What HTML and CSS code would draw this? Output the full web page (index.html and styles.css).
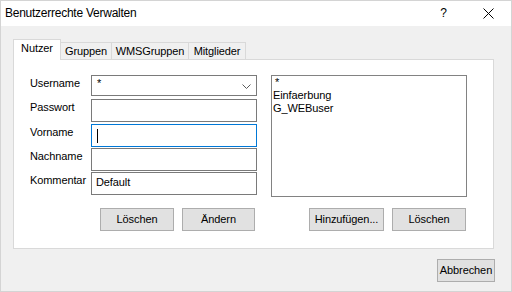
FILE: index.html
```html
<!DOCTYPE html>
<html>
<head>
<meta charset="utf-8">
<title>Benutzerrechte Verwalten</title>
<link rel="stylesheet" href="styles.css">
</head>
<body>
<div class="window">
  <div class="titlebar">
    <span class="title">Benutzerrechte Verwalten</span>
    <span class="help">?</span>
    <svg class="close" width="11" height="11" viewBox="0 0 11 11"><path d="M0.5 0.5 L10.5 10.5 M10.5 0.5 L0.5 10.5" stroke="#000" stroke-width="1" fill="none"/></svg>
  </div>
  <div class="client">
    <div class="tabs">
      <div class="tab active t-nutzer">Nutzer</div>
      <div class="tab t-gruppen">Gruppen</div>
      <div class="tab t-wms">WMSGruppen</div>
      <div class="tab t-mitglieder">Mitglieder</div>
      <div class="tab-fill"></div>
    </div>
    <div class="panel">
      <div class="top">
        <div class="form">
          <div class="row row-user">
            <div class="label">Username</div>
            <div class="combo"><span class="star">*</span>
              <svg class="chevron" width="9" height="5" viewBox="0 0 9 5"><path d="M0.5 0.5 L4.5 4.5 L8.5 0.5" stroke="#5a5a5a" stroke-width="1" fill="none"/></svg>
            </div>
          </div>
          <div class="row row-pass">
            <div class="label">Passwort</div>
            <div class="field"></div>
          </div>
          <div class="row row-vor">
            <div class="label">Vorname</div>
            <div class="field focused"><span class="caret"></span></div>
          </div>
          <div class="row row-nach">
            <div class="label">Nachname</div>
            <div class="field"></div>
          </div>
          <div class="row row-komm">
            <div class="label">Kommentar</div>
            <div class="field">Default</div>
          </div>
        </div>
        <div class="listbox">
          <div class="item"><span class="star">*</span></div>
          <div class="item">Einfaerbung</div>
          <div class="item">G_WEBuser</div>
        </div>
      </div>
      <div class="buttons">
        <button class="btn b-del1">Löschen</button>
        <button class="btn b-edit">Ändern</button>
        <button class="btn b-add">Hinzufügen...</button>
        <button class="btn b-del2">Löschen</button>
      </div>
    </div>
    <div class="footer">
      <button class="btn b-cancel">Abbrechen</button>
    </div>
  </div>
</div>
</body>
</html>
```

FILE: styles.css
```css
* { box-sizing: border-box; }
html, body { margin: 0; padding: 0; background: #f0f0f0; }
body { font-family: "Liberation Sans", Arial, sans-serif; font-size: 11px; color: #000; }

.window {
  width: 512px;
  height: 292px;
  border: 1px solid #d4d4d4;
  background: #f0f0f0;
  display: flex;
  flex-direction: column;
}

.titlebar {
  height: 25px;
  background: #fff;
  display: flex;
  align-items: center;
  padding-left: 4px;
  flex: none;
}
.title { font-size: 12px; line-height: 15px; letter-spacing: -0.25px; }
.help { margin-left: auto; margin-right: 36px; font-size: 12px; line-height: 15px; }
.close { margin-right: 17px; display: block; }

.client {
  flex: 1;
  padding: 13px 16px 0 12px;
  display: flex;
  flex-direction: column;
  letter-spacing: -0.1px;
}

.tabs {
  height: 21px;
  display: flex;
  align-items: flex-end;
  flex: none;
}
.tab {
  height: 18px;
  border: 1px solid #d9d9d9;
  border-left: none;
  background: #f0f0f0;
  text-align: center;
  line-height: 13px;
  padding-top: 2px;
  white-space: nowrap;
}
.tab.active {
  height: 21px;
  border-left: 1px solid #d9d9d9;
  border-bottom: none;
  background: #fff;
  padding-top: 2px;
}
.t-nutzer { width: 48px; }
.t-gruppen { width: 51px; }
.t-wms { width: 77px; }
.t-mitglieder { width: 57px; }
.tab-fill {
  flex: 1;
  margin-right: 1px;
  border-bottom: 1px solid #d9d9d9;
}

.panel {
  height: 189px;
  margin-right: 1px;
  background: #fff;
  border: 1px solid #d9d9d9;
  border-top: none;
  padding: 15px 0 0 16px;
  display: flex;
  flex-direction: column;
  flex: none;
}

.top { display: flex; align-items: flex-start; }

.form { width: 227px; display: flex; flex-direction: column; }
.row { display: flex; align-items: flex-start; }
.label { width: 61px; line-height: 13px; padding-top: 2px; white-space: nowrap; }
.row-pass { margin-top: 3px; }
.row-vor { margin-top: 2px; }
.row-nach { margin-top: 1px; }
.row-komm { margin-top: 1px; }

.combo {
  width: 166px;
  height: 21px;
  border: 1px solid #7a7a7a;
  background: #fff;
  display: flex;
  align-items: flex-start;
  padding: 1px 5px 0 3px;
  line-height: 13px;
}
.chevron { margin-left: auto; margin-top: 7px; display: block; }
.star { padding-left: 2px; }

.field {
  width: 166px;
  height: 23px;
  border: 1px solid #7a7a7a;
  background: #fff;
  padding: 3px 3px 0 4px;
  line-height: 13px;
}
.field.focused { border-color: #0078d7; }
.caret {
  display: inline-block;
  width: 1px;
  height: 14px;
  background: #000;
  margin-top: 1px;
  margin-left: 1px;
  vertical-align: top;
}

.listbox {
  margin-left: 14px;
  width: 196px;
  height: 122px;
  border: 1px solid #828282;
  background: #fff;
  padding: 0 0 0 1px;
  line-height: 13px;
}

.buttons {
  display: flex;
  margin-top: 11px;
}
.btn {
  font-family: "Liberation Sans", Arial, sans-serif;
  font-size: 11px;
  letter-spacing: -0.1px;
  color: #000;
  height: 23px;
  background: #e1e1e1;
  border: 1px solid #adadad;
  padding: 0;
  margin: 0;
  line-height: 13px;
  text-align: center;
}
.b-del1 { width: 74px; margin-left: 70px; }
.b-edit { width: 73px; margin-left: 8px; }
.b-add { width: 75px; margin-left: 54px; }
.b-del2 { width: 74px; margin-left: 8px; }

.footer {
  display: flex;
  justify-content: flex-end;
  margin-top: 10px;
}
.b-cancel { width: 58px; }
```
